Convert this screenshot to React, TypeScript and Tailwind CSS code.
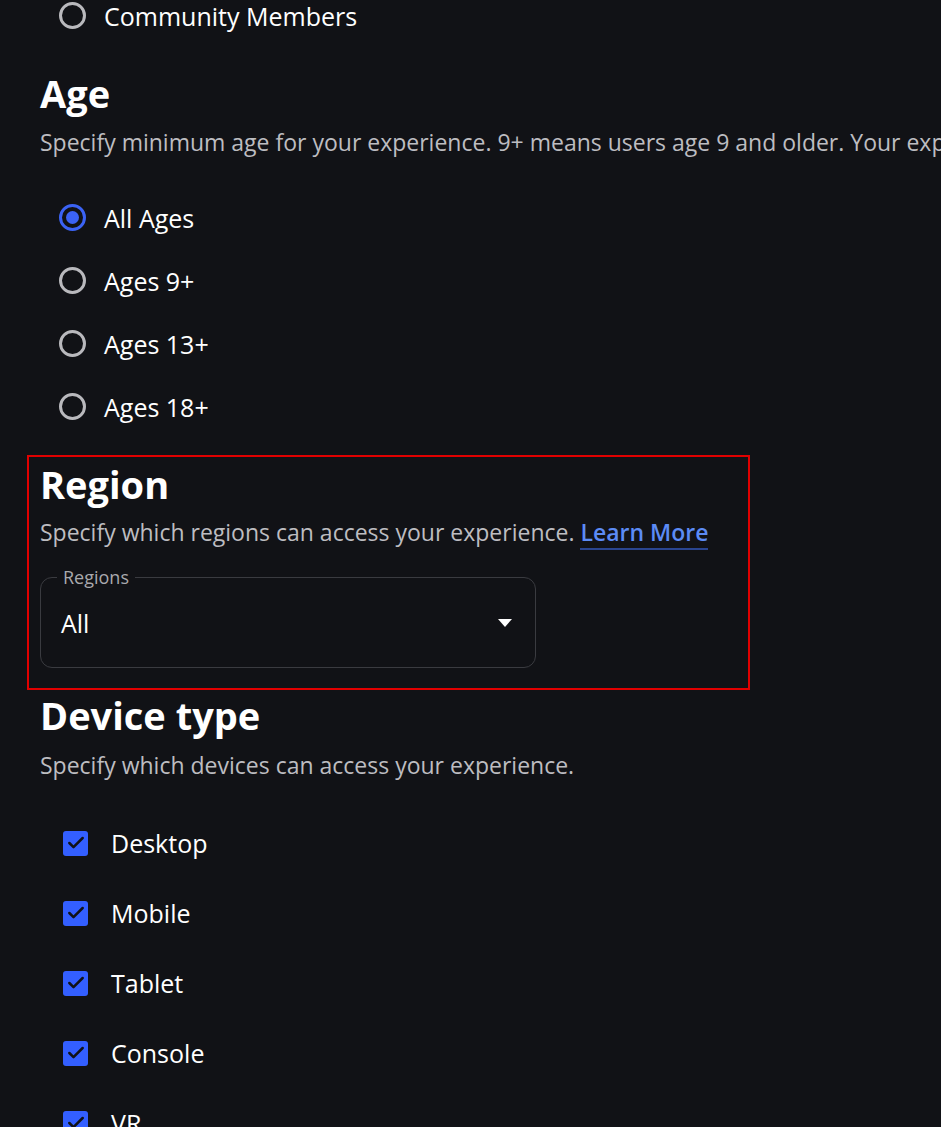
import { Check } from "lucide-react";

const font = { fontFamily: '"Open Sans", "Noto Sans", sans-serif' };

function Radio({ label, checked }: { label: string; checked?: boolean }) {
  return (
    <div className="flex h-[63px] items-center gap-[18px] pl-[59px]">
      {checked ? (
        <span className="flex h-[27px] w-[27px] items-center justify-center rounded-full border-[3px] border-[#3b63f5]">
          <span className="h-[13px] w-[13px] rounded-full bg-[#3b63f5]" />
        </span>
      ) : (
        <span className="h-[27px] w-[27px] rounded-full border-[3px] border-[#b9b9bd]" />
      )}
      <span className="text-[25px] leading-[34px] text-white">{label}</span>
    </div>
  );
}

function CheckItem({ label }: { label: string }) {
  return (
    <div className="flex h-[70px] items-center gap-[23px] pl-[63px]">
      <span className="flex h-[25px] w-[25px] items-center justify-center rounded-[3px] bg-[#335fff]">
        <Check className="h-[20px] w-[20px] text-[#111216]" strokeWidth={3} />
      </span>
      <span className="text-[25px] leading-[34px] text-white">{label}</span>
    </div>
  );
}

export default function App() {
  return (
    <div className="h-[1127px] w-[941px] overflow-hidden bg-[#111216]" style={font}>
      <div className="-mt-[16px]">
        <Radio label="Community Members" />
      </div>

      <div className="px-[40px] pt-[22px]">
        <h2 className="text-[38px] font-bold leading-[48px] text-white">Age</h2>
        <p className="mt-[9px] whitespace-nowrap text-[23px] leading-[32px] text-[#bdbdc1]">
          Specify minimum age for your experience. 9+ means users age 9 and older. Your experience
        </p>
      </div>

      <div className="mt-[28px]">
        <Radio label="All Ages" checked />
        <Radio label="Ages 9+" />
        <Radio label="Ages 13+" />
        <Radio label="Ages 18+" />
      </div>

      <div className="ml-[27px] mt-[17px] w-[723px] border-[2px] border-[#e10000] px-[11px] pb-[20px] pt-[3px]">
        <h2 className="text-[38px] font-bold leading-[48px] text-white">Region</h2>
        <p className="mt-[8px] text-[23px] leading-[32px] text-[#bdbdc1]">
          Specify which regions can access your experience.{" "}
          <span className="border-b-2 border-[#2a4590] font-semibold text-[#5c8bf5]">Learn More</span>
        </p>
        <div className="relative mt-[29px] flex h-[91px] w-[496px] items-center justify-between rounded-[12px] border border-[#3a3b40] px-[20px]">
          <span className="absolute -top-[14px] left-[16px] bg-[#111216] px-[6px] text-[18px] leading-[26px] text-[#a9a9ad]">
            Regions
          </span>
          <span className="text-[25px] leading-[34px] text-white">All</span>
          <svg width="14" height="8" viewBox="0 0 14 8" className="mr-[3px]">
            <path d="M0 0h14L7 8z" fill="#ffffff" />
          </svg>
        </div>
      </div>

      <div className="px-[40px] pt-[1px]">
        <h2 className="text-[38px] font-bold leading-[48px] text-white">Device type</h2>
        <p className="mt-[10px] text-[23px] leading-[32px] text-[#bdbdc1]">
          Specify which devices can access your experience.
        </p>
      </div>

      <div className="mt-[27px]">
        <CheckItem label="Desktop" />
        <CheckItem label="Mobile" />
        <CheckItem label="Tablet" />
        <CheckItem label="Console" />
        <CheckItem label="VR" />
      </div>
    </div>
  );
}
